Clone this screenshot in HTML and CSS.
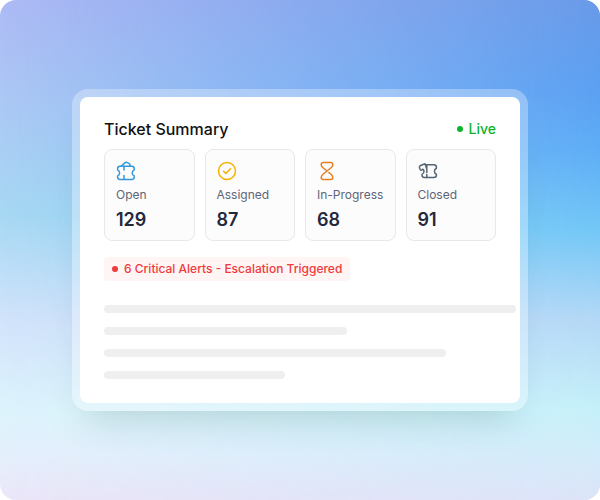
FILE: index.html
```html
<!DOCTYPE html>
<html lang="en">
<head>
    <meta charset="UTF-8">
    <meta name="viewport" content="width=device-width, initial-scale=1.0">
    <title>Ticket Summary</title>
    <link rel="stylesheet" href="styles.css">
</head>
<body>
    <main class="stage">
        <section class="frame">
            <div class="panel">
                <header class="panel-header">
                    <h1>Ticket Summary</h1>
                    <span class="live">Live</span>
                </header>

                <div class="stats">
                    <div class="stat">
                        <svg class="icon open" viewBox="0 0 20 20" aria-hidden="true">
                            <path d="M4 5.300H15.800Q18.200 5.300 18.200 7.700V8.900Q16.200 9.800 16.200 11.900T18.200 15V16Q18.200 18.400 15.800 18.400H4Q1.600 18.400 1.600 16V15Q3.600 14 3.600 11.900T1.600 8.900V7.700Q1.600 5.300 4 5.300Z"/>
                            <path d="M5.300 5L8.900 1.900Q10 1 11.400 1.600L12.900 2.400Q14.200 3.200 14.300 5M8 5.300V9M8 14.500V18.300"/>
                        </svg>
                        <span class="label">Open</span>
                        <strong>129</strong>
                    </div>
                    <div class="stat">
                        <svg class="icon assigned" viewBox="0 0 20 20" aria-hidden="true">
                            <circle cx="10" cy="10" r="8.500"/>
                            <path d="M6.500 10.200L8.900 12.500L13.500 7.800"/>
                        </svg>
                        <span class="label">Assigned</span>
                        <strong>87</strong>
                    </div>
                    <div class="stat">
                        <svg class="icon progress" viewBox="0 0 20 20" aria-hidden="true">
                            <path d="M6.300 1.500H13.700Q15.800 1.500 15.800 3.500Q15.800 5.200 14.300 6.500L5.700 13.500Q4.200 14.800 4.200 16.500Q4.200 18.500 6.300 18.500H13.700Q15.800 18.500 15.800 16.500Q15.800 14.800 14.300 13.500L5.700 6.500Q4.200 5.200 4.200 3.500Q4.200 1.500 6.300 1.500Z"/>
                        </svg>
                        <span class="label">In-Progress</span>
                        <strong>68</strong>
                    </div>
                    <div class="stat">
                        <svg class="icon closed" viewBox="0 0 20 20" aria-hidden="true">
                            <path d="M9 3.800H15.800Q18.400 3.800 18.400 6.200V7.200Q16.400 8 16.400 10.200T18.400 13.300V14.100Q18.400 16.600 15.800 16.600H6.500Q4 16.600 4 14.100V13.300Q6 12.300 6 10.200Q6 8.600 4.600 8.300"/>
                            <path d="M4.600 8.500Q3.100 9.800 2.200 8.600L1.500 6.800Q1 5.200 2.600 4.500L7 2.800L8.600 7.600M8.800 3.800V11.500M8.800 13.500V16.600"/>
                        </svg>
                        <span class="label">Closed</span>
                        <strong>91</strong>
                    </div>
                </div>

                <p class="alert">6 Critical Alerts - Escalation Triggered</p>

                <!-- placeholder rows -->
                <div class="lines">
                    <div class="line line-full"></div>
                    <div class="line line-medium"></div>
                    <div class="line line-long"></div>
                    <div class="line line-short"></div>
                </div>
            </div>
        </section>
    </main>
</body>
</html>
```
FILE: styles.css
```css
* {
    box-sizing: border-box;
}

body {
    margin: 0;
    background: #fff;
    font-family: Inter, "Liberation Sans", sans-serif;
}

.stage {
    position: relative;
    min-height: 100vh;
    padding: 24px 72px;
    display: flex;
    align-items: center;
    border-radius: 16px;
    overflow: hidden;
    background: linear-gradient(180deg, #adbaf5 0%, #acc8f4 20%, #a7d8f3 43%, #d2e3fb 64%, #def4fc 83%, #e5effc 91%, #ebe6f8 100%);
}

/* deeper blue on the right, fading out to the left */
.stage::before {
    content: "";
    position: absolute;
    inset: 0;
    background: linear-gradient(180deg, #689ae8 0%, #5ba0f2 18%, #5eadf6 30%, #72c7f6 46%, #b4d8f6 64%, #c5f0f9 82%, #d2ebfa 91%, #dce3f8 100%);
    mask-image: linear-gradient(90deg, transparent, #000);
}

.frame {
    position: relative;
    width: 100%;
    padding: 8px;
    border-radius: 16px;
    background: rgba(255, 255, 255, 0.3);
    box-shadow: 0 24px 32px -16px rgba(60, 90, 80, 0.2);
}

.panel {
    padding: 24px;
    border-radius: 8px;
    background: #fff;
}

.panel-header {
    display: flex;
    justify-content: space-between;
    align-items: center;
    margin-bottom: 12px;
}

h1 {
    margin: 0;
    font-size: 16px;
    line-height: 16px;
    font-weight: 500;
    color: #111;
}

.live {
    display: flex;
    align-items: center;
    gap: 6px;
    font-size: 14px;
    line-height: 16px;
    font-weight: 500;
    color: #0bb52b;
}

.live::before,
.alert::before {
    content: "";
    width: 6px;
    height: 6px;
    border-radius: 50%;
    background: currentColor;
}

.stats {
    display: grid;
    grid-template-columns: repeat(4, 1fr);
    gap: 10px;
    margin-bottom: 16px;
}

.stat {
    display: flex;
    flex-direction: column;
    gap: 6px;
    padding: 11px 11px 9px;
    border: 1px solid #e8e8e8;
    border-radius: 8px;
    background: #fcfcfc;
}

.icon {
    width: 20px;
    height: 20px;
    fill: none;
    stroke: currentColor;
    stroke-width: 1.5;
    stroke-linecap: round;
    stroke-linejoin: round;
}

.open {
    color: #3498db;
}

.assigned {
    color: #f5b000;
}

.progress {
    color: #e67e22;
}

.closed {
    color: #566573;
}

.label {
    font-size: 12px;
    line-height: 16px;
    color: #5d6579;
    white-space: nowrap;
}

.stat strong {
    font-size: 18px;
    line-height: 22px;
    font-weight: 600;
    color: #23283d;
}

.alert {
    display: flex;
    align-items: center;
    gap: 6px;
    width: fit-content;
    margin: 0 0 24px;
    padding: 4px 8px;
    border-radius: 4px;
    background: #fff5f4;
    font-size: 12px;
    line-height: 16px;
    font-weight: 500;
    color: #f03a3e;
}

.lines {
    display: flex;
    flex-direction: column;
    gap: 14px;
    margin-right: -20px;
}

.line {
    height: 8px;
    border-radius: 4px;
    background: #efefef;
}

.line-medium {
    width: 59%;
}

.line-long {
    width: 83%;
}

.line-short {
    width: 44%;
}
```
